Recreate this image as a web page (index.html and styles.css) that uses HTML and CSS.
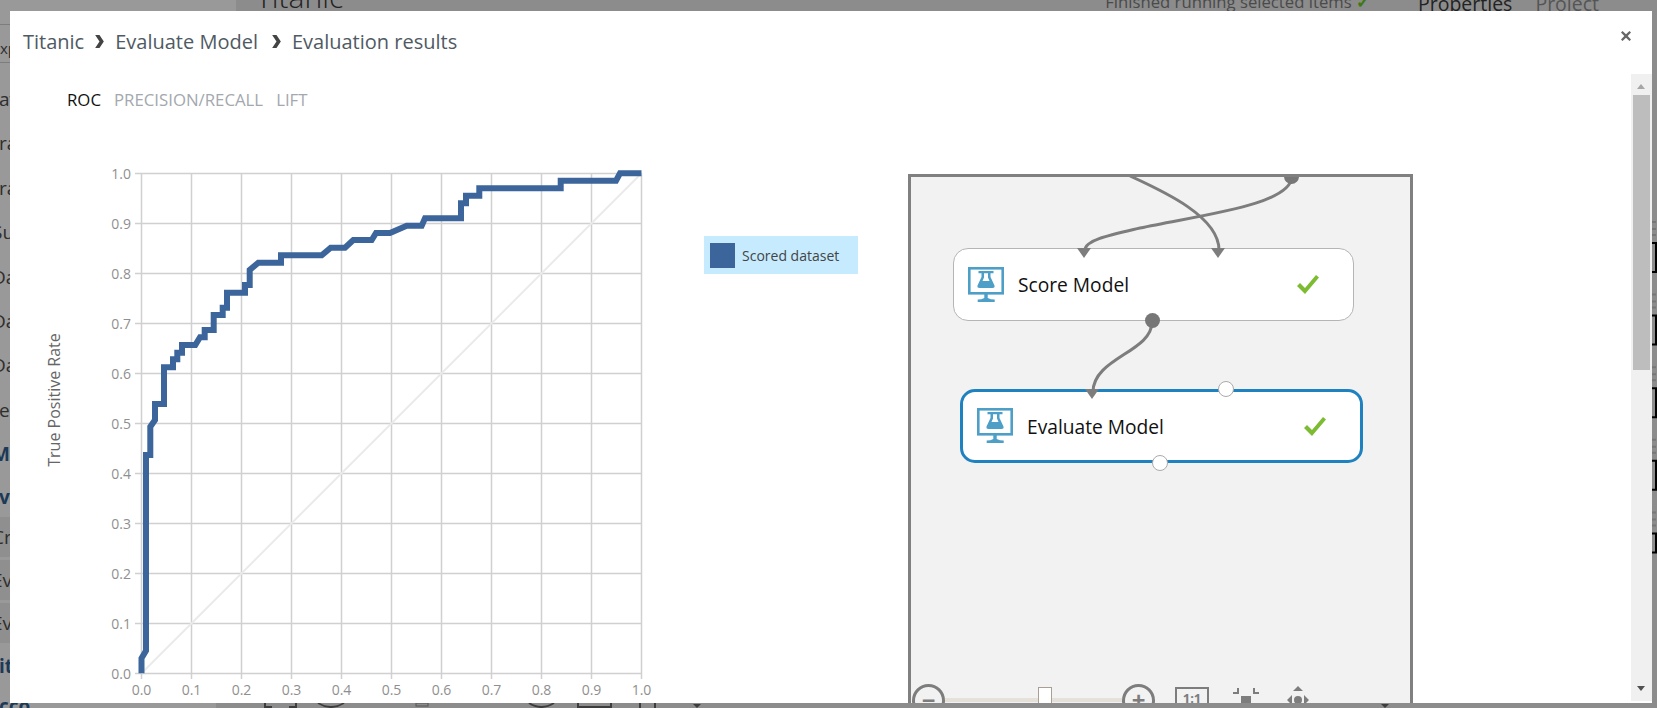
FILE: index.html
```html
<!DOCTYPE html>
<html lang="en">
<head>
  <meta charset="UTF-8" />
  <title>Evaluation results</title>
  <link rel="stylesheet" href="styles.css">
</head>
<body>
  <div class="studio">
    <div class="palette">
      <div class="palette-row search">xp</div>
      <div class="palette-row">av</div>
      <div class="palette-row">ra</div>
      <div class="palette-row">ra</div>
      <div class="palette-row cut">Su</div>
      <div class="palette-row cut">Da</div>
      <div class="palette-row cut">Da</div>
      <div class="palette-row cut">Da</div>
      <div class="palette-row">ea</div>
      <div class="palette-row group cut">Ma</div>
      <div class="palette-row group short">va</div>
      <div class="palette-row item cut">Cr</div>
      <div class="palette-row item cut">Ev</div>
      <div class="palette-row item cut">Ev</div>
      <div class="palette-row group short">it</div>
      <div class="palette-row group short">cco</div>
    </div>
    <div class="canvas">
      <div class="canvas-title">Titanic</div>
      <div class="canvas-status">Finished running selected items <span class="status-check">✓</span></div>
    </div>
    <div class="side">
      <span class="side-tab">Properties</span>
      <span class="side-tab dim">Project</span>
    </div>
    <!-- bits of the page that stick out around the dialog -->
    <svg class="backdrop" width="1657" height="708" viewBox="0 0 1657 708">
      <rect x="216" y="703" width="20" height="5" fill="#8c8c8c"/>
      <path id="edge" class="edge" d=""/>
      <path id="edge-dashes" class="edge-dashes" d=""/>
      <path class="stub" d="M265 703v4h7M296 703v4h-7M318 703q13 8 26 0M529 703q12 8 25 0M578 703v4h33v-4M640 703v5M655 703v5"/>
      <rect class="stub-box" x="416" y="703" width="12" height="3"/>
      <path class="stub-fill" d="M693 704h8l-4 4zM1381 704h8l-4 4z"/>
    </svg>
  </div>

  <div class="modal">
    <header class="modal-head">
      <span>Titanic</span>
      <svg class="crumb-arrow" viewBox="0 0 10 12"><path d="M1 0h4l4 6-4 6H1l4-6z"/></svg>
      <span>Evaluate Model</span>
      <svg class="crumb-arrow wide" viewBox="0 0 10 12"><path d="M1 0h4l4 6-4 6H1l4-6z"/></svg>
      <span>Evaluation results</span>
      <svg class="close" viewBox="0 0 10 10"><path d="M1.500 0L5 3.300 8.500 0 10 1.500 6.700 5 10 8.500 8.500 10 5 6.700 1.500 10 0 8.500 3.300 5 0 1.500z"/></svg>
    </header>

    <nav class="tabs">
      <span class="tab active">ROC</span>
      <span class="tab">PRECISION/RECALL</span>
      <span class="tab">LIFT</span>
    </nav>

    <div class="results">
      <svg class="chart" width="640" height="545" viewBox="30 160 640 545">
        <g id="grid" class="grid"></g>
        <path class="diagonal" d="M141.500 673.300L641.500 173.300"/>
        <path class="roc" d="M141.500 673.300V658.300L146 650.700V455H150.300V426.700L155 420V404H164V367.300H173V359.300H177.300V352.700H182V345H195.300L200 337.300H204.700V330H213.700V315H222.700V307.700H227V292.700H245V285H249.700V270L258.300 262.700H281V255.300H321.700L330.700 247.700H345L353.300 240H371.700L376 233H390L406.700 225.700H421.700L425 218.300H461V203.300H466V195.700H479.300V188.300H560.700V180.700H616L620 173.300H641.500"/>
        <g id="ticks" class="ticks"></g>
        <text class="axis-title" transform="translate(60 400) rotate(-90)" text-anchor="middle">True Positive Rate</text>
      </svg>

      <div class="legend">
        <span class="legend-swatch"></span>
        <span>Scored dataset</span>
      </div>

      <div class="graph">
        <svg class="wires" width="500" height="300" viewBox="908 174 500 300">
          <path d="M1130 176C1165 192 1219 217 1219 250"/>
          <path d="M1292 176C1292 205 1200 215 1140 228C1110 235 1085 240 1085 250"/>
          <path d="M1152 322C1152 352 1093 358 1093 392"/>
        </svg>
        <span class="port out top-out"></span>

        <div class="module score">
          <svg class="module-icon" viewBox="0 0 36 36"><use href="#flask-screen"/></svg>
          <span class="module-name">Score Model</span>
          <svg class="module-check" viewBox="0 0 22 19"><path d="M0 11l3-3 5 5L19 0l3 2.500L8 19z"/></svg>
          <span class="port in in-a"></span>
          <span class="port in in-b"></span>
          <span class="port out out-a"></span>
        </div>

        <div class="module evaluate">
          <svg class="module-icon" viewBox="0 0 36 36"><use href="#flask-screen"/></svg>
          <span class="module-name">Evaluate Model</span>
          <svg class="module-check" viewBox="0 0 22 19"><path d="M0 11l3-3 5 5L19 0l3 2.500L8 19z"/></svg>
          <span class="port in in-a"></span>
          <span class="port open open-b"></span>
          <span class="port open open-a"></span>
        </div>

        <div class="graph-tools">
          <span class="zoom-btn">−</span>
          <div class="zoom-track"><span class="zoom-thumb"></span></div>
          <span class="zoom-btn">+</span>
          <span class="one-to-one">1:1</span>
          <svg class="tool-icon" viewBox="0 0 30 20"><path d="M2 7h5V2M28 7h-5V2" fill="none" stroke="#7d7d7d" stroke-width="2"/><rect x="10" y="10" width="10" height="8" fill="#7d7d7d"/></svg>
          <svg class="tool-icon" viewBox="0 0 30 20"><path d="M15 0l5 5H10zM4 14l5-5v10zM26 14l-5-5v10z" fill="#7d7d7d"/><circle cx="15" cy="14" r="4" fill="#7d7d7d"/></svg>
        </div>
      </div>
    </div>

    <div class="scrollbar">
      <span class="scroll-up"></span>
      <span class="scroll-thumb"></span>
      <span class="scroll-down"></span>
    </div>
  </div>

  <svg class="defs" width="0" height="0">
    <symbol id="flask-screen" viewBox="0 0 36 36">
      <rect x="1.300" y="1.300" width="33.400" height="25" fill="none" stroke="#4d9fc7" stroke-width="2.600"/>
      <path d="M10.500 4h15v2.200h-3v3.800l4 8.500q.5 2.500-2 2.500H11.500q-2.500 0-2-2.500l4-8.500V6.200h-3zM16 6.200v4.300L14.500 14h7L20 10.500V6.200z" fill="#4d9fc7"/>
      <path d="M16.300 26h3.400v5q3 1.500 7 1.500V35h-17v-2.500q4 0 6.600-1.500z" fill="#4d9fc7"/>
    </symbol>
  </svg>

  <script>
    const svgNs = 'http://www.w3.org/2000/svg';
    const grid = document.getElementById('grid');
    const ticks = document.getElementById('ticks');

    const addLine = (x1, y1, x2, y2) => {
      const line = document.createElementNS(svgNs, 'line');
      line.setAttribute('x1', x1);
      line.setAttribute('y1', y1);
      line.setAttribute('x2', x2);
      line.setAttribute('y2', y2);
      grid.appendChild(line);
    };

    const addTick = (x, y, anchor, label) => {
      const text = document.createElementNS(svgNs, 'text');
      text.setAttribute('x', x);
      text.setAttribute('y', y);
      text.setAttribute('text-anchor', anchor);
      text.textContent = label;
      ticks.appendChild(text);
    };

    for (let i = 0; i <= 10; i++) {
      const label = (i / 10).toFixed(1);
      const x = 141.5 + i * 50;
      const y = 173.5 + (10 - i) * 50;
      addLine(x, 173.5, x, 679);
      addLine(135, y, 641.5, y);
      addTick(x, 695, 'middle', label);
      addTick(131, y + 5, 'end', label);
    }

    // brackets from the page's right column, repeated down the edge
    let edge = '';
    let dashes = '';
    for (let i = 0; i < 5; i++) {
      const top = 243 + i * 72.6;
      const bottom = i === 4 ? top + 19 : top + 29;
      edge += `M1652 ${top}h4V${bottom}h-4`;
      dashes += `M1652 ${top - 21}h4M1652 ${top - 14}h4M1652 ${top - 8}h4`;
    }
    document.getElementById('edge').setAttribute('d', edge);
    document.getElementById('edge-dashes').setAttribute('d', dashes);
  </script>
</body>
</html>
```

FILE: styles.css
```css
* {
  box-sizing: border-box;
}

html,
body {
  height: 100%;
}

body {
  margin: 0;
  overflow: hidden;
  font-family: "Open Sans", "Noto Sans", sans-serif;
  background-color: #8c8c8c;
}

/* page behind the dialog */
.studio {
  display: flex;
  height: 708px;
  color: #222;
}

.palette {
  width: 236px;
  flex: none;
  background-color: #999;
  padding-top: 24px;
  overflow: hidden;
}

.palette-row {
  height: 44.400px;
  line-height: 44px;
  font-size: 19px;
  white-space: nowrap;
  color: #2e2e2e;
  margin-left: -1px;
}

.palette-row.cut {
  margin-left: -8px;
  padding-left: 0;
}

.palette-row.search {
  height: 39px;
  line-height: 46px;
  font-size: 15px;
  border-top: 1px solid #7d7d7d;
  border-bottom: 1px solid #7d7d7d;
  margin-left: 0;
  margin-bottom: 14px;
}

.palette-row.group {
  font-weight: 700;
  color: #1c3a57;
}

.palette-row.short {
  height: 40px;
  line-height: 40px;
}

.palette-row.item {
  height: 43px;
  line-height: 40px;
  background-color: #8f8f8f;
  border-bottom: 3px solid #999;
}

.canvas {
  flex: 1;
  display: flex;
  justify-content: space-between;
  padding-left: 20px;
  padding-right: 17px;
}

.canvas-title {
  font-size: 30px;
  line-height: 1;
  margin-top: -18px;
  font-weight: 300;
}

.canvas-status {
  font-size: 16.700px;
  line-height: 1;
  margin-top: -6px;
  color: #4a4a4a;
}

.status-check {
  color: #3c7a10;
  font-weight: 700;
}

.side {
  width: 270px;
  flex: none;
  padding-left: 31px;
  display: flex;
  gap: 23px;
  font-size: 19.500px;
  line-height: 1;
  margin-top: -6px;
}

.side-tab.dim {
  color: #555;
}

.backdrop {
  position: absolute;
  left: 0;
  top: 0;
}

.edge,
.edge-dashes,
.stub {
  fill: none;
  stroke-width: 2;
}

.edge {
  stroke: #000;
}

.edge-dashes {
  stroke: #777;
}

.stub {
  stroke: #3d3d3d;
}

.stub-box {
  fill: none;
  stroke: #555;
}

.stub-fill {
  fill: #3d3d3d;
}

/* dialog */
.modal {
  position: absolute;
  left: 10px;
  top: 11px;
  width: 1642px;
  height: 692px;
  background: #fff;
  overflow: hidden;
}

.modal-head {
  display: flex;
  align-items: center;
  height: 60px;
  padding-left: 13px;
  font-size: 20px;
  color: #4f5a63;
}

.crumb-arrow {
  width: 11px;
  height: 13px;
  margin: 0 10px 0 10px;
  fill: #444;
}

.crumb-arrow.wide {
  margin-left: 13px;
}

.close {
  position: absolute;
  right: 21px;
  top: 20px;
  width: 10px;
  height: 10px;
  fill: #666;
}

.tabs {
  display: flex;
  gap: 13px;
  padding-left: 57px;
  margin-top: 17px;
  font-size: 16.800px;
  line-height: 23px;
  color: #a3a8ae;
}

.tab.active {
  color: #111;
}

.results {
  display: flex;
  align-items: flex-start;
  margin-top: 49px;
}

.chart {
  flex: none;
  margin-left: 20px;
}

.grid line {
  stroke: #d0d0d0;
  stroke-width: 1.500;
}

.diagonal {
  stroke: #eaeaea;
  stroke-width: 2;
  fill: none;
}

.roc {
  fill: none;
  stroke: #3c669b;
  stroke-width: 6;
}

.ticks text {
  fill: #8f8f8f;
  font-size: 14px;
}

.axis-title {
  fill: #666;
  font-size: 16px;
}

.legend {
  display: flex;
  align-items: center;
  gap: 7px;
  width: 154px;
  height: 38px;
  margin-left: 34px;
  margin-top: 76px;
  padding-left: 6px;
  background-color: #c6ebff;
  font-size: 14px;
  color: #444;
}

.legend-swatch {
  width: 25px;
  height: 25px;
  background-color: #3c669b;
}

.graph {
  position: relative;
  flex: none;
  width: 505px;
  height: 540px;
  margin-left: 50px;
  margin-top: 14px;
  background-color: #f2f2f2;
  border: 3px solid #808080;
  border-bottom: 0;
  overflow: hidden;
}

.wires {
  position: absolute;
  left: -3px;
  top: -3px;
  fill: none;
  stroke: #7d7d7d;
  stroke-width: 3;
}

.module {
  position: absolute;
  display: flex;
  align-items: center;
  background: #fff;
  border-radius: 15px;
  font-size: 19.200px;
  color: #111;
}

.module.score {
  left: 42px;
  top: 71px;
  width: 401px;
  height: 73px;
  border: 1.500px solid #b5b5b5;
}

.module.evaluate {
  left: 49px;
  top: 212px;
  width: 403px;
  height: 74px;
  border: 3px solid #1f82c0;
}

.module-icon {
  width: 36px;
  height: 36px;
  margin-left: 14px;
  flex: none;
}

.module-name {
  margin-left: 14px;
  flex: 1;
}

.module-check {
  width: 22px;
  height: 19px;
  margin-right: 34px;
  fill: #7dbc32;
}

.port {
  position: absolute;
  display: block;
}

.port.in {
  width: 0;
  height: 0;
  top: -1px;
  border-left: 7px solid transparent;
  border-right: 7px solid transparent;
  border-top: 10px solid #7d7d7d;
}

.port.out {
  width: 15px;
  height: 15px;
  border-radius: 50%;
  background-color: #777;
}

.port.open {
  width: 16px;
  height: 16px;
  border-radius: 50%;
  background-color: #fff;
  border: 1.500px solid #aaa;
}

.score .in-a { left: 123px; }
.score .in-b { left: 257px; }
.score .out-a { left: 191px; bottom: -8px; }
.evaluate .in-a { left: 122px; top: -3px; }
.evaluate .open-b { left: 255px; top: -11px; }
.evaluate .open-a { left: 189px; bottom: -11px; }

.top-out {
  left: 373px;
  top: -8px;
}

.graph-tools {
  position: absolute;
  left: 1px;
  top: 507px;
  display: flex;
  align-items: flex-start;
}

.zoom-btn {
  flex: none;
  width: 33px;
  height: 33px;
  border: 3px solid #7d7d7d;
  border-radius: 50%;
  text-align: center;
  line-height: 25px;
  font-size: 24px;
  font-weight: 700;
  color: #7d7d7d;
}

.zoom-track {
  position: relative;
  width: 177px;
  height: 4px;
  margin-top: 14px;
  background-color: #e6e0da;
}

.zoom-thumb {
  position: absolute;
  left: 93px;
  top: -11px;
  width: 14px;
  height: 24px;
  background-color: #fff;
  border: 1px solid #a89f96;
}

.one-to-one {
  width: 34px;
  height: 26px;
  margin-left: 20px;
  margin-top: 3px;
  border: 2px solid #7d7d7d;
  text-align: center;
  font-size: 13px;
  font-weight: 700;
  color: #7d7d7d;
}

.tool-icon {
  width: 30px;
  height: 20px;
  margin-left: 22px;
  margin-top: 2px;
}

/* scrollbar */
.scrollbar {
  position: absolute;
  right: 0;
  top: 63px;
  bottom: 2px;
  width: 21px;
  background-color: #f0f0f0;
}

.scroll-up,
.scroll-down {
  position: absolute;
  left: 6px;
  width: 0;
  height: 0;
  border-left: 4px solid transparent;
  border-right: 4px solid transparent;
}

.scroll-up {
  top: 10px;
  border-bottom: 5px solid #a6a6a6;
}

.scroll-down {
  bottom: 10px;
  border-top: 5px solid #505050;
}

.scroll-thumb {
  position: absolute;
  left: 2px;
  right: 2px;
  top: 21px;
  height: 275px;
  background-color: #bdbdbd;
}

.defs {
  position: absolute;
}
```
